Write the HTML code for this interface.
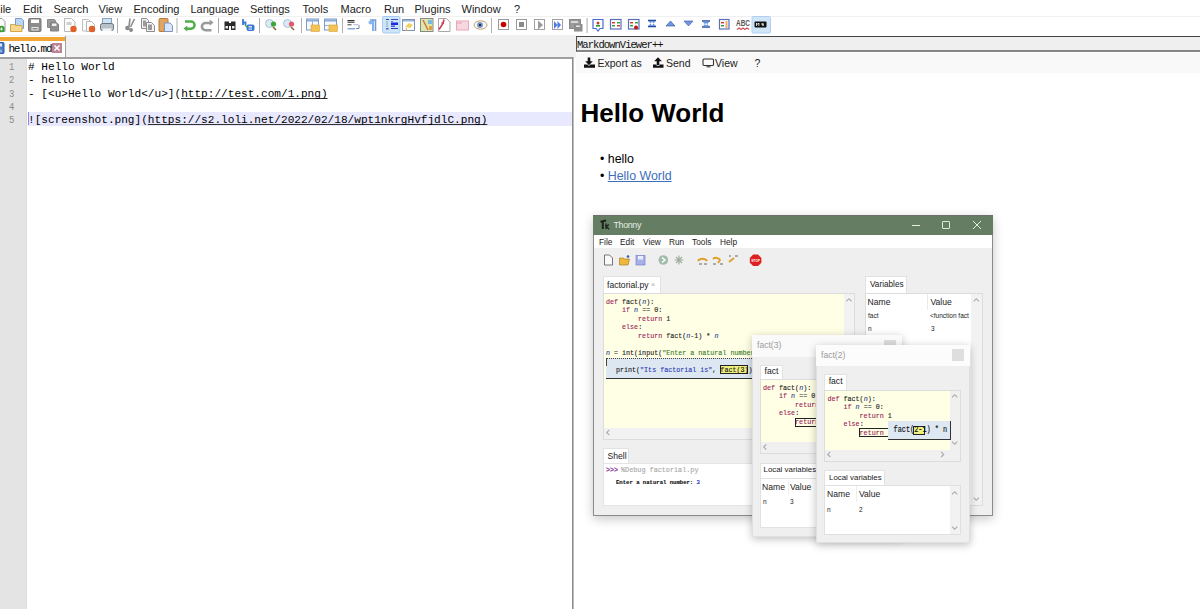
<!DOCTYPE html>
<html><head><meta charset="utf-8">
<style>
*{box-sizing:border-box}
html,body{margin:0;padding:0}
body{width:1200px;height:609px;overflow:hidden;position:relative;background:#fff;font-family:"Liberation Sans",sans-serif;color:#000}
.a{position:absolute}
.m{position:absolute;top:3px;font-size:11px;color:#222;white-space:nowrap;line-height:13px}
.mono{font-family:"Liberation Mono",monospace}
.ed{position:absolute;left:28px;font-family:"Liberation Mono",monospace;font-size:11.1px;white-space:pre;line-height:13px;color:#000}
.ln{position:absolute;left:8.5px;font-family:"Liberation Mono",monospace;font-size:11.1px;line-height:13px;color:#8c8c8c;transform:scaleX(.8);transform-origin:0 0}
.u{text-decoration:underline;text-underline-offset:1px;text-decoration-skip-ink:none;text-decoration-color:#333}
.ic{position:absolute;top:18px;width:14px;height:14px}
.sep{position:absolute;top:18px;width:1px;height:15px;background:#c8c8c8}
</style></head><body>
<!-- menubar -->
<div class="a" style="left:0;top:0;width:1200px;height:16px;background:#fff"></div>
<div class="m" style="left:-6.5px">File</div>
<div class="m" style="left:23px">Edit</div>
<div class="m" style="left:53.5px">Search</div>
<div class="m" style="left:98.5px">View</div>
<div class="m" style="left:133.5px">Encoding</div>
<div class="m" style="left:190.5px">Language</div>
<div class="m" style="left:250px">Settings</div>
<div class="m" style="left:302.5px">Tools</div>
<div class="m" style="left:340.5px">Macro</div>
<div class="m" style="left:384px">Run</div>
<div class="m" style="left:414.5px">Plugins</div>
<div class="m" style="left:461.5px">Window</div>
<div class="m" style="left:514px">?</div>
<!-- toolbar -->
<div class="a" style="left:0;top:16px;width:1200px;height:19px;background:#fff;border-top:1px solid #f0f0f0"></div>
<svg class="a" style="left:0;top:15px" width="800" height="20" viewBox="0 15 800 20">
<!-- new -->
<path d="M-6 18.5h8l3 3v10h-11z" fill="#fbfbfb" stroke="#9a9a9a" stroke-width="1"/>
<circle cx="1.5" cy="29" r="3.2" fill="#3f9a3a"/><path d="M0 29h3M1.5 27.5v3" stroke="#d8f0d0" stroke-width="1"/>
<!-- open -->
<path d="M15.5 18.5h6l2 2v8h-8z" fill="#b9d5f3" stroke="#7a9ccc"/>
<path d="M10.5 24.5h4l1 1h6.5v6h-11.5z" fill="#f6d98c" stroke="#d4a84a"/>
<!-- save -->
<rect x="28.5" y="18.5" width="12.5" height="13" rx="1" fill="#8c8c8c" stroke="#7a7a7a"/>
<rect x="31" y="19.5" width="8" height="3.5" fill="#fff"/>
<rect x="31.5" y="27" width="7" height="3.5" fill="#e6e6e6"/><rect x="32.5" y="28" width="5" height="1.5" fill="#8c8c8c"/>
<!-- save all -->
<path d="M47.5 19.5h7l1 1v7h-8z" fill="#9a9a9a" stroke="#888"/>
<path d="M50.5 22.5h6l2 2v6.5h-8z" fill="#8e8e8e" stroke="#808080"/><rect x="52" y="23.5" width="4.5" height="2.5" fill="#f0f0f0"/>
<!-- close -->
<path d="M64.5 18.5h7l3.5 3.5v9.5h-10.5z" fill="#fcfcfc" stroke="#b8b8b8"/><rect x="66.5" y="22" width="5" height="3" fill="#cfcfcf"/>
<circle cx="73.5" cy="29" r="3.2" fill="#e0622a"/>
<!-- close all -->
<path d="M82.5 19.5h6l2 2v9.5h-8z" fill="#fcfcfc" stroke="#c0c0c0"/>
<path d="M86.5 21.5h5l3 3v7h-8z" fill="#fcfcfc" stroke="#b8b8b8"/>
<circle cx="92" cy="29" r="3.2" fill="#e0622a"/>
<!-- print -->
<rect x="102.5" y="18.5" width="9" height="6" fill="#cfe3f5" stroke="#8aa3bd"/>
<rect x="100.5" y="23.5" width="13" height="7" rx="2" fill="#b8c0c8" stroke="#6a7580"/>
<rect x="102.5" y="28.5" width="9" height="2.5" fill="#f4f4f4"/>
<rect x="117" y="18" width="1" height="15" fill="#b0b0b0"/>
<!-- cut -->
<path d="M130 18.5l-1 8M134.5 19l-4 8" stroke="#8a8a8a" stroke-width="1.6"/>
<circle cx="127.5" cy="28" r="2.3" fill="#8a8a8a"/><circle cx="131" cy="30" r="2" fill="#8a8a8a"/>
<!-- copy -->
<path d="M141.5 18.5h5l2 2v8h-7z" fill="#f4f4f4" stroke="#8c8c8c"/><rect x="143" y="20.5" width="3" height="6" fill="#9a9a9a"/>
<path d="M146.5 22.5h5l3 3v6h-8z" fill="#f4f4f4" stroke="#8c8c8c"/><rect x="148" y="24.5" width="4" height="5.5" fill="#9a9a9a"/>
<!-- paste -->
<rect x="159" y="18.5" width="9" height="13" rx="1" fill="#e0a560" stroke="#b87a3a"/>
<path d="M164.5 23h5.5l2.5 2.5v6h-8z" fill="#d8e8fa" stroke="#7c95c0"/>
<rect x="176.5" y="18" width="1" height="15" fill="#b0b0b0"/>
<!-- undo -->
<path d="M185 21.5h6a3.6 3.6 0 0 1 0 7.2h-4.5" fill="none" stroke="#4fae4a" stroke-width="2.4"/>
<path d="M183.5 28.6l3.8-3v6z" fill="#4fae4a"/>
<!-- redo -->
<path d="M211 23h-5.5a3.6 3.6 0 0 0 0 7.2h6" fill="none" stroke="#9a9a9a" stroke-width="2.6"/>
<path d="M213.5 22.6l-3.8-3.2v6.4z" fill="#9a9a9a"/>
<rect x="218" y="18" width="1" height="15" fill="#a8a8a8"/>
<!-- find -->
<rect x="224.5" y="21.5" width="4.5" height="8.5" fill="#2a2a2a"/><rect x="231" y="21.5" width="4.5" height="8.5" fill="#2a2a2a"/>
<rect x="229" y="23" width="2" height="3" fill="#2a2a2a"/><rect x="225.5" y="26" width="2.5" height="2.5" fill="#e8e8e8"/><rect x="232" y="26" width="2.5" height="2.5" fill="#e8e8e8"/>
<!-- replace -->
<path d="M243 19v6M243 22.5h2.5v2.5" stroke="#3a78d0" stroke-width="1.8" fill="none"/>
<rect x="246.5" y="24.5" width="8" height="6.5" rx="2" fill="#3a78d0"/><rect x="248.5" y="26" width="3.5" height="1.5" fill="#cfe0f8"/><rect x="248.5" y="28.5" width="3.5" height="1.2" fill="#cfe0f8"/>
<path d="M245 25l2 2" stroke="#3aa83a" stroke-width="1.2"/>
<rect x="259" y="18" width="1" height="15" fill="#a8a8a8"/>
<!-- zoom in -->
<circle cx="269.5" cy="23.5" r="4" fill="#dbe9f6" stroke="#a9c2dc"/>
<circle cx="273.5" cy="24" r="2.6" fill="#3aa83a"/><path d="M273 27l3 3" stroke="#8a6a3a" stroke-width="1.6"/>
<!-- zoom out -->
<circle cx="287.5" cy="23.5" r="4" fill="#dbe9f6" stroke="#a9c2dc"/>
<circle cx="291.5" cy="24" r="2.6" fill="#e05a6a"/><path d="M291 27l3 3" stroke="#8a6a3a" stroke-width="1.6"/>
<rect x="301" y="18" width="1" height="15" fill="#b0b0b0"/>
<!-- sync v -->
<rect x="306.5" y="19" width="12" height="11" fill="#f4f8fc" stroke="#7a9cc8"/><rect x="307" y="19.5" width="11" height="2" fill="#8aaad8"/><path d="M312.5 21v9" stroke="#9ab0d0"/>
<rect x="311" y="25" width="8.5" height="6.5" fill="#f3c451" stroke="#d6a43a" stroke-width=".6"/>
<!-- sync h -->
<rect x="324.5" y="19" width="12" height="11" fill="#f4f8fc" stroke="#7a9cc8"/><rect x="325" y="19.5" width="11" height="2" fill="#8aaad8"/><path d="M325 25.5h11" stroke="#9ab0d0"/>
<rect x="329" y="25" width="8.5" height="6.5" fill="#f3c451" stroke="#d6a43a" stroke-width=".6"/>
<rect x="342" y="18" width="1" height="15" fill="#b0b0b0"/>
<!-- word wrap -->
<rect x="347.5" y="20" width="7" height="1.4" fill="#333"/><rect x="347.5" y="22" width="7" height="1" fill="#666"/>
<rect x="347.5" y="24" width="4" height="1.4" fill="#777"/><rect x="353.5" y="24.2" width="5" height="1" fill="#a8b8d8"/>
<rect x="347.5" y="28" width="7.5" height="1.5" fill="#8aa8d8"/><path d="M359 25v3.5h-3" fill="none" stroke="#7088b0" stroke-width="1"/>
<!-- pilcrow -->
<path d="M370 20h5.5v11M373 20v11" stroke="#6d9ddb" stroke-width="1.6" fill="none"/><circle cx="370.5" cy="22.5" r="2" fill="#8ab6ee"/>
<!-- indent guide highlighted -->
<rect x="382.5" y="16.5" width="17.5" height="16.5" rx="1.5" fill="#cde4f9" stroke="#a6cbf0"/>
<rect x="386" y="19" width="3" height="1" fill="#2a3fa8"/><rect x="386.5" y="21" width="1" height="6" fill="#8ab"/>
<rect x="386" y="28" width="2.5" height="1.5" fill="#4a5fd8"/>
<rect x="391" y="19" width="7" height="1" fill="#3a4ab8"/><rect x="391" y="21" width="2" height="1" fill="#6a7ad8"/>
<rect x="391" y="22.5" width="7" height="2.5" fill="#1a2ae0"/><rect x="391" y="25.5" width="4" height="1.5" fill="#4a5ae0"/><rect x="391" y="28" width="7" height="1" fill="#2a3ab8"/>
<!-- udl -->
<rect x="402.5" y="19.5" width="12" height="11" fill="#fdfdfd" stroke="#7c94b8"/><rect x="403" y="20" width="11" height="1.5" fill="#9ab4d8"/>
<path d="M405 27l4-4 4 2-3 3z" fill="#f0d060"/><path d="M406 28l1 3" stroke="#f0a040" stroke-width="1"/>
<!-- doc map -->
<rect x="420.5" y="18.5" width="12.5" height="13" fill="#d8e8a8" stroke="#888"/><path d="M423 20l5 10" stroke="#e06040" stroke-width="1.2"/><rect x="428" y="20" width="4" height="4" fill="#7ab8e0"/><rect x="429" y="26" width="3" height="4" fill="#e0a040"/>
<!-- function list -->
<path d="M438.5 18.5h8l3.5 3.5v9.5h-11.5z" fill="#fff" stroke="#a8a8a8"/><path d="M439 29.5l4-6l1-4" stroke="#d03a5a" stroke-width="1.6" fill="none"/><path d="M441 23h3" stroke="#d03a5a"/>
<!-- folder pink -->
<rect x="456.5" y="21" width="12" height="9" fill="#f8d8e0" stroke="#e8a8b8"/><path d="M457 23h5" stroke="#e0a0b0"/>
<!-- eye -->
<ellipse cx="480.5" cy="25" rx="6.5" ry="4.2" fill="#f8f8f8" stroke="#c8a070" stroke-width="1"/><circle cx="480" cy="25" r="3" fill="#7a9cc8"/><circle cx="480" cy="25" r="1.2" fill="#1a2a4a"/>
<rect x="491" y="18" width="1" height="15" fill="#b0b0b0"/>
<!-- record -->
<rect x="498.5" y="19.5" width="10" height="10" fill="#fff" stroke="#9a9a9a"/><circle cx="503.5" cy="24.5" r="2.8" fill="#cc0000"/>
<!-- stop -->
<rect x="516.5" y="19.5" width="10" height="10" fill="#fff" stroke="#9a9a9a"/><rect x="519" y="22" width="5" height="5" fill="#8a8a8a"/>
<!-- play -->
<rect x="534.5" y="19.5" width="10" height="10" fill="#fff" stroke="#a0a0a0"/><path d="M538 20.5l5 4.5-5 4.5z" fill="#9a9a9a"/>
<!-- run multiple -->
<rect x="552.5" y="19.5" width="10" height="10" fill="#fff" stroke="#a0a0a0"/><path d="M554 21l3.5 4-3.5 4zM557.5 21l3.5 4-3.5 4z" fill="#4a7ae0"/>
<!-- save macro -->
<rect x="569.5" y="19.5" width="11" height="9" fill="#9a9a9a" stroke="#888"/><rect x="571" y="21" width="7" height="2" fill="#d8d8d8"/>
<rect x="574" y="24" width="8.5" height="7.5" fill="#8e8e8e"/><rect x="576" y="25.5" width="4" height="1.5" fill="#e8e8e8"/>
<rect x="586.5" y="18" width="1.2" height="15" fill="#b8b8b8"/>
<!-- compare -->
<path d="M593 19.5h10v9h-3l-2 2.5-2-2.5h-3z" fill="#fff" stroke="#4a6ad0" stroke-width="1.2"/><circle cx="598" cy="23" r="1.5" fill="#c04030"/><rect x="596" y="25" width="4" height="1.6" fill="#2a9a3a"/>
<!-- compare2 -->
<rect x="610.5" y="19.5" width="10.5" height="9.5" fill="#fff" stroke="#5a70b8" stroke-width="1.2"/><rect x="612" y="22" width="3" height="1.4" fill="#d03030"/><rect x="617" y="22" width="3" height="1.4" fill="#2a9a3a"/><rect x="612" y="25" width="3" height="1.4" fill="#2a9a3a"/><rect x="617" y="25" width="3" height="1.4" fill="#d03030"/>
<!-- clear -->
<rect x="628.5" y="19.5" width="10.5" height="9.5" fill="#fff" stroke="#5a70b8" stroke-width="1.2"/><rect x="630" y="22" width="3" height="1.4" fill="#d03030"/><rect x="635" y="22" width="3" height="1.4" fill="#2a9a3a"/><rect x="630" y="25" width="3" height="1.4" fill="#2a9a3a"/><circle cx="636" cy="27.5" r="2" fill="#c01818"/>
<!-- first -->
<path d="M648 20.5h8M648 26.5h8" stroke="#2a4aa0" stroke-width="1.6"/><path d="M648.5 21l3.5 4.5 3.5-4.5z M648.5 26l3.5-4.5 3.5 4.5z" fill="#6a98e0"/>
<!-- prev -->
<path d="M666 26l4.5-5 4.5 5z" fill="#6a98e0" stroke="#2a4aa0" stroke-width=".6"/>
<!-- next -->
<path d="M684 21l4.5 5 4.5-5z" fill="#6a98e0" stroke="#4a4ab0" stroke-width=".6"/>
<!-- last -->
<path d="M702 21h8M702 27h8" stroke="#2a4aa0" stroke-width="1.6"/><path d="M702.5 21.5l3.5 4 3.5-4z M702.5 26.5l3.5-3.5 3.5 3.5z" fill="#6a98e0"/>
<!-- navbar -->
<rect x="719.5" y="19.5" width="9.5" height="9.5" fill="#fff" stroke="#5a70b8" stroke-width="1.2"/><rect x="721" y="22" width="3" height="1.4" fill="#d03030"/><rect x="721" y="25" width="3" height="1.4" fill="#2a9a3a"/><rect x="725.5" y="21" width="2" height="7" fill="#f0a870"/>
<!-- ABC -->
<text x="736" y="26" font-family="Liberation Sans" font-size="8.5" font-weight="bold" fill="#555" textLength="14" lengthAdjust="spacingAndGlyphs">ABC</text>
<path d="M737 29.5l2-1.5 2 1.5 2-1.5 2 1.5 2-1.5 2 1.5" fill="none" stroke="#d0505a" stroke-width="1.2"/>
<!-- MD highlighted -->
<rect x="752" y="16.5" width="18.5" height="16.5" rx="1" fill="#d0e5f8" stroke="#b0d0f0"/>
<rect x="754.5" y="21.5" width="12" height="6" rx="1" fill="#111"/><path d="M756.5 23v3M756.5 23l1.2 1.4 1.2-1.4v3M762 23v2h2M763 23v3" stroke="#fff" stroke-width=".8" fill="none"/>
</svg>

<!-- left tab area -->
<div class="a" style="left:0;top:35px;width:576px;height:23px;background:#f0f0f0"></div>
<div class="a" style="left:0;top:36px;width:66px;height:22px;background:#fff;border-right:1px solid #a0a0a0"></div>
<div class="a" style="left:0;top:37px;width:65px;height:3.5px;background:#f0a535"></div>
<svg class="a" style="left:0;top:42px" width="6" height="12" viewBox="0 0 6 12"><rect x="-6" y="0.5" width="10" height="11" rx="1" fill="#4a7ac8" stroke="#2a5aa8"/><rect x="-4" y="1.5" width="6" height="3" fill="#dfe8f8"/><rect x="-4" y="7.5" width="6" height="3" fill="#8ab0e0"/></svg>
<div class="a mono" style="left:8.5px;top:43.2px;font-size:11px;line-height:12px;color:#000;letter-spacing:-1.25px">hello.md</div>
<svg class="a" style="left:52px;top:43px" width="10" height="10" viewBox="0 0 10 10"><rect width="10" height="10" fill="#bb8596"/><path d="M2.5 2.5l5 5M7.5 2.5l-5 5" stroke="#fff" stroke-width="1.6"/></svg>
<!-- editor -->
<div class="a" style="left:0;top:57px;width:572px;height:2px;background:#a0a0a0"></div>
<div class="a" style="left:0;top:59px;width:572px;height:550px;background:#fff"></div>
<div class="a" style="left:0;top:59px;width:27px;height:550px;background:#e4e4e4"></div>
<div class="a" style="left:574px;top:35px;width:2px;height:23px;background:#f0f0f0"></div>
<div class="a" style="left:572px;top:57px;width:1px;height:552px;background:#8c8c8c"></div>
<div class="a" style="left:573px;top:57px;width:1px;height:552px;background:#bdbdbd"></div>
<div class="a" style="left:26px;top:59px;width:1px;height:550px;background:#dcdcdc"></div>
<div class="a" style="left:28px;top:112px;width:544px;height:14px;background:#e8e8ff"></div>
<div class="a" style="left:28px;top:112px;width:1px;height:13px;background:#8a8ae8"></div>
<div class="ln" style="top:61px">1</div>
<div class="ln" style="top:74.25px">2</div>
<div class="ln" style="top:87.5px">3</div>
<div class="ln" style="top:100.75px">4</div>
<div class="ln" style="top:114px">5</div>
<div class="ed" style="top:61px"># Hello World</div>
<div class="ed" style="top:74.25px">- hello</div>
<div class="ed" style="top:87.5px">- [&lt;u&gt;Hello World&lt;/u&gt;](<span class="u">http://test.com/1.png)</span></div>
<div class="ed" style="top:114px">![screenshot.png](<span class="u">https://s2.loli.net/2022/02/18/wpt1nkrgHvfjdlC.png)</span></div>
<!-- right panel -->
<div class="a" style="left:576px;top:35px;width:624px;height:574px;background:#fff"></div>
<div class="a" style="left:576px;top:36px;width:624px;height:16px;background:#efefef;border-top:1px solid #444;border-left:1px solid #555;border-bottom:2px solid #858585"></div>
<div class="a" style="left:577px;top:38.5px;font-family:'Liberation Mono',monospace;font-size:10.5px;line-height:12px;color:#111;letter-spacing:-0.95px">MarkdownViewer++</div>
<div class="a" style="left:576px;top:52px;width:624px;height:21px;background:#f9f9f9;border-top:1px solid #fff"></div>
<svg class="a" style="left:583px;top:56px" width="14" height="13" viewBox="0 0 14 13"><path d="M6 1.5v5" stroke="#111" stroke-width="2.6"/><path d="M2.2 5.2l3.8 4 3.8-4z" fill="#111"/><path d="M1 8.5h3.5l1.5 1.5 1.5-1.5h4.5v3.2h-11z" fill="#111"/></svg>
<div class="a" style="left:597.5px;top:57.3px;font-size:10.5px;line-height:12px;color:#222">Export as</div>
<svg class="a" style="left:652px;top:56px" width="14" height="13" viewBox="0 0 14 13"><path d="M6 9v-5" stroke="#111" stroke-width="2.6"/><path d="M2.2 5.2l3.8-4 3.8 4z" fill="#111"/><path d="M1 8.5h3.5v1.2h3v-1.2h4v3.2h-10.5z" fill="#111"/></svg>
<div class="a" style="left:666px;top:57.3px;font-size:10.5px;line-height:12px;color:#222">Send</div>
<svg class="a" style="left:702px;top:57.5px" width="13" height="10" viewBox="0 0 13 10"><rect x="1" y="1" width="10.5" height="6.5" rx="1" fill="none" stroke="#333" stroke-width="1.1"/><path d="M4.5 8.8h4" stroke="#333" stroke-width="1.1"/></svg>
<div class="a" style="left:715px;top:57.3px;font-size:10.5px;line-height:12px;color:#222">View</div>
<div class="a" style="left:754.5px;top:57.3px;font-size:10.5px;line-height:12px;color:#222">?</div>

<div class="a" style="left:580.5px;top:98px;font-size:26px;font-weight:bold;line-height:30px">Hello World</div>
<div class="a" style="left:600px;top:151.2px;font-size:12.4px;line-height:16px">• hello</div>
<div class="a" style="left:600px;top:167.7px;font-size:12.4px;line-height:16px">• <span style="color:#3b70b8;text-decoration:underline;text-underline-offset:1px">Hello World</span></div>
<!-- THONNY -->
<style>
.t{position:absolute;font-family:"Liberation Sans",sans-serif;white-space:nowrap;line-height:1}
.c{position:absolute;font-family:"Liberation Mono",monospace;font-size:6.7px;white-space:pre;line-height:1;color:#1a1a1a;font-weight:normal;-webkit-text-stroke:.12px;margin-top:.7px}
.kw{color:#9a2257}
.it{font-style:italic;color:#2f3f8f}
.st{color:#3a7d2a}
.tab{position:absolute;background:#fff;border:1px solid #e2e2e2;border-bottom:none}
.sa{position:absolute;font-family:"Liberation Sans",sans-serif;font-size:7px;color:#a8a8a8;line-height:1}
</style>
<!-- main window shadow -->
<div class="a" style="left:593px;top:215px;width:400px;height:301px;box-shadow:0 3px 10px rgba(0,0,0,.22)"></div>
<div class="a" style="left:593px;top:215px;width:400px;height:301px;background:#efefef;border:1px solid #8a8a8a;border-top:none"></div>
<div class="a" style="left:593px;top:215px;width:400px;height:20px;background:#657d62;border-top:1px solid #6b706b"></div>
<svg class="a" style="left:599px;top:219px" width="12" height="13" viewBox="0 0 12 13"><path d="M1.5 2.8l5.5-1.2M3.8 2.3v7.8" stroke="#1a241a" stroke-width="2" fill="none"/><path d="M7 4.5v5.5M7 8l2.8-2.5M7.6 7.6l2.4 2.6" stroke="#1a241a" stroke-width="1.4" fill="none"/></svg>
<div class="t" style="left:613.5px;top:220.5px;font-size:8.9px;color:#e6eee4;letter-spacing:-.35px">Thonny</div>
<div class="a" style="left:912px;top:224.5px;width:8px;height:1.5px;background:#e4ece2"></div>
<div class="a" style="left:942px;top:221px;width:8px;height:8px;border:1px solid #dfe8dc;border-radius:1px"></div>
<svg class="a" style="left:972px;top:220px" width="10" height="10" viewBox="0 0 10 10"><path d="M1 1l8 8M9 1l-8 8" stroke="#e4ece2" stroke-width="1"/></svg>
<div class="a" style="left:594px;top:235px;width:398px;height:13px;background:#fff"></div>
<div class="t" style="left:599px;top:238px;font-size:8.3px;color:#222">File</div>
<div class="t" style="left:620px;top:238px;font-size:8.3px;color:#222">Edit</div>
<div class="t" style="left:643px;top:238px;font-size:8.3px;color:#222">View</div>
<div class="t" style="left:669px;top:238px;font-size:8.3px;color:#222">Run</div>
<div class="t" style="left:692px;top:238px;font-size:8.3px;color:#222">Tools</div>
<div class="t" style="left:720px;top:238px;font-size:8.3px;color:#222">Help</div>
<!-- thonny toolbar icons -->
<svg class="a" style="left:600px;top:252px" width="170" height="16" viewBox="600 252 170 16">
<path d="M604.5 255h5l3 3v7h-8z" fill="#fafafa" stroke="#555" stroke-width=".8"/>
<path d="M619.5 258h4l1 1h5l-1.5 6h-8.5z" fill="#f0b838" stroke="#9a7020" stroke-width=".6"/><circle cx="628" cy="256.5" r="1.3" fill="#3a5ab0"/>
<rect x="636" y="255.5" width="9" height="9.5" fill="#a8b0e8" stroke="#6a74c0" stroke-width=".6"/><rect x="638" y="256" width="5" height="3.5" fill="#e8ecff"/>
<circle cx="663.3" cy="260" r="4.8" fill="#a2bcaa"/><path d="M662 257.5l3 2.5-3 2.5" stroke="#fff" stroke-width="1.4" fill="none"/>
<path d="M676 257l6 6M682 257l-6 6M679 255.5v9M674.5 260h9" stroke="#a0b0a0" stroke-width="1.2"/>
<path d="M698 261a5 4 0 0 1 9 0" fill="none" stroke="#e0a030" stroke-width="2"/><path d="M699 264h3M704 264h3" stroke="#444" stroke-width=".8"/>
<path d="M713 259a4 3 0 0 1 7 1l-2 3" fill="none" stroke="#e0a030" stroke-width="2"/><path d="M713 264h3M720 264h3" stroke="#444" stroke-width=".8"/>
<path d="M729 262l5-4" fill="none" stroke="#e0a030" stroke-width="2"/><path d="M735 256h3M729 256h2" stroke="#444" stroke-width=".8"/>
<path d="M753.2 254.5h4.8l3.4 3.4v4.8l-3.4 3.4h-4.8l-3.4-3.4v-4.8z" fill="#dd2020"/><text x="751.2" y="261.8" font-family="Liberation Sans" font-size="3.2" font-weight="bold" fill="#fff">STOP</text>
</svg>
<!-- editor tab -->
<div class="tab" style="left:603px;top:276px;width:58px;height:18px"></div>
<div class="t" style="left:607px;top:280.8px;font-size:8.6px;color:#222">factorial.py</div>
<div class="t" style="left:651px;top:281px;font-size:7px;color:#aaa">×</div>
<!-- editor panel -->
<div class="a" style="left:603px;top:293px;width:252px;height:147px;background:#f2f2f2;border:1px solid #dcdcdc"></div>
<div class="a" style="left:604px;top:294px;width:240px;height:134px;background:#ffffe6"></div>
<div class="c" style="left:606px;top:298px"><span class="kw">def</span> fact(<span class="it">n</span>):</div>
<div class="c" style="left:606px;top:306.6px">    <span class="kw">if</span> <span class="it">n</span> == 0:</div>
<div class="c" style="left:606px;top:315.2px">        <span class="kw">return</span> 1</div>
<div class="c" style="left:606px;top:323.8px">    <span class="kw">else</span>:</div>
<div class="c" style="left:606px;top:332.4px">        <span class="kw">return</span> fact(<span class="it">n</span>-1) * <span class="it">n</span></div>
<div class="c" style="left:606px;top:349.6px"><span class="it">n</span> = int(input(<span class="st">"Enter a natural number: "</span>))</div>
<div class="a" style="left:606px;top:357.5px;width:150px;height:21.5px;background:#dde7f1;border-top:1px dotted #444;border-bottom:1.5px solid #333"></div>
<div class="a" style="left:606px;top:358px;width:1px;height:8px;background:#444"></div>
<div class="a" style="left:720px;top:365px;width:28px;height:9px;background:#f0f080;border:1px solid #222"></div>
<div class="c" style="left:616px;top:366px">print(<span style="color:#2a3ab8">"Its factorial is"</span>, fact(3))</div>
<!-- variables tab/panel -->
<div class="tab" style="left:865px;top:276px;width:42px;height:18px"></div>
<div class="t" style="left:870px;top:281px;font-size:8.2px;color:#222">Variables</div>
<div class="a" style="left:865px;top:293px;width:118px;height:213px;background:#f2f2f2;border:1px solid #dcdcdc"></div>
<div class="a" style="left:866px;top:294px;width:105px;height:211px;background:#fff"></div>
<div class="a" style="left:927px;top:294px;width:1px;height:16px;background:#eaeaea"></div>
<div class="t" style="left:867.5px;top:298px;font-size:8.6px;color:#222">Name</div>
<div class="t" style="left:930.5px;top:298px;font-size:8.6px;color:#222">Value</div>
<div class="t" style="left:868px;top:313px;font-size:6.5px;color:#222">fact</div>
<div class="t" style="left:930px;top:313px;width:40px;overflow:hidden;font-size:6.5px;color:#222">&lt;function fact a</div>
<div class="t" style="left:868px;top:326px;font-size:6.5px;color:#222">n</div>
<div class="t" style="left:931px;top:326px;font-size:6.5px;color:#222">3</div>
<!-- shell -->
<div class="tab" style="left:603px;top:448px;width:26px;height:16px"></div>
<div class="t" style="left:607.5px;top:451.5px;font-size:8.6px;color:#222">Shell</div>
<div class="a" style="left:603px;top:463px;width:252px;height:43px;background:#fff;border:1px solid #e4e4e4"></div>
<div class="c" style="left:606px;top:466px;color:#8a3a9a;font-weight:bold">&gt;&gt;&gt;</div>
<div class="c" style="left:621px;top:466px;color:#a8a8a8;font-weight:normal;font-size:6.8px">%Debug factorial.py</div>
<div class="c" style="left:616px;top:479.5px;font-size:5.6px;font-weight:bold;color:#111">Enter a natural number: <span style="color:#3a3ac0">3</span></div>

<svg class="a" style="left:0;top:0" width="1200" height="609"><path d="M846.4 301.3l2.6-2.6 2.6 2.6 M609.3 429.9l-2.6 2.6 2.6 2.6 M973.6999999999999 301.3l2.6-2.6 2.6 2.6 M973.6999999999999 497.7l2.6 2.6 2.6-2.6" fill="none" stroke="#a8a8a8" stroke-width="1.1"/></svg>
<!-- fact(3) window -->
<div class="a" style="left:752px;top:334.5px;width:150px;height:202px;background:#efefef;box-shadow:0 2px 8px rgba(0,0,0,.25);border:1px solid #e0e0e0"></div>
<div class="a" style="left:752px;top:334.5px;width:150px;height:22px;background:#fafafa"></div>
<div class="t" style="left:757px;top:340.5px;font-size:8.6px;color:#9a9a9a">fact(3)</div>
<div class="a" style="left:884px;top:340px;width:12px;height:12px;background:#dcdcdc"></div>
<div class="tab" style="left:760px;top:364.5px;width:23px;height:15px"></div>
<div class="t" style="left:764.5px;top:366.8px;font-size:8.6px;color:#222">fact</div>
<div class="a" style="left:760px;top:379px;width:140px;height:75px;background:#f0f0f0;border:1px solid #dcdcdc"></div>
<div class="a" style="left:761px;top:380px;width:130px;height:62px;background:#ffffe6"></div>
<div class="c" style="left:763px;top:384px"><span class="kw">def</span> fact(<span class="it">n</span>):</div>
<div class="c" style="left:763px;top:392.6px">    <span class="kw">if</span> <span class="it">n</span> == 0:</div>
<div class="c" style="left:763px;top:401.2px">        <span class="kw">return</span> 1</div>
<div class="c" style="left:763px;top:409.8px">    <span class="kw">else</span>:</div>
<div class="a" style="left:795px;top:418.4px;width:30px;height:9px;border:1px solid #222;background:#ffffe6"></div>
<div class="c" style="left:763px;top:418.6px">        <span class="kw">return</span> fact(<span class="it">n</span>-1) * <span class="it">n</span></div>
<div class="tab" style="left:760px;top:462.5px;width:60px;height:15px"></div>
<div class="t" style="left:763.5px;top:466px;font-size:7.9px;color:#222">Local variables</div>
<div class="a" style="left:759.5px;top:477.5px;width:140px;height:50px;background:#fff;border:1px solid #e2e2e2"></div>
<div class="a" style="left:788px;top:478px;width:1px;height:16px;background:#eee"></div>
<div class="t" style="left:762px;top:482.5px;font-size:8.6px;color:#222">Name</div>
<div class="t" style="left:790px;top:482.5px;font-size:8.6px;color:#222">Value</div>
<div class="t" style="left:763px;top:498.5px;font-size:6.5px;color:#222">n</div>
<div class="t" style="left:790px;top:498.5px;font-size:6.5px;color:#222">3</div>

<svg class="a" style="left:0;top:0" width="1200" height="609"><path d="M766.3 444.4l-2.6 2.6 2.6 2.6" fill="none" stroke="#a8a8a8" stroke-width="1.1"/></svg>
<!-- fact(2) window -->
<div class="a" style="left:815.5px;top:345px;width:154px;height:197.5px;background:#efefef;box-shadow:0 2px 8px rgba(0,0,0,.25);border:1px solid #e0e0e0"></div>
<div class="a" style="left:815.5px;top:345px;width:154px;height:21px;background:#fcfcfc"></div>
<div class="t" style="left:821px;top:351px;font-size:8.6px;color:#9a9a9a">fact(2)</div>
<div class="a" style="left:952px;top:349px;width:12px;height:12px;background:#dedede"></div>
<div class="tab" style="left:824px;top:373.5px;width:23px;height:16px"></div>
<div class="t" style="left:828.7px;top:377px;font-size:8.6px;color:#222">fact</div>
<div class="a" style="left:823.5px;top:389.5px;width:137px;height:72px;background:#f0f0f0;border:1px solid #dcdcdc"></div>
<div class="a" style="left:824.5px;top:390.5px;width:125.5px;height:59px;background:#ffffe6"></div>
<div class="c" style="left:827.5px;top:395px"><span class="kw">def</span> fact(<span class="it">n</span>):</div>
<div class="c" style="left:827.5px;top:403.6px">    <span class="kw">if</span> <span class="it">n</span> == 0:</div>
<div class="c" style="left:827.5px;top:412.2px">        <span class="kw">return</span> 1</div>
<div class="c" style="left:827.5px;top:420.8px">    <span class="kw">else</span>:</div>
<div class="a" style="left:859px;top:428px;width:30px;height:9px;border:1px solid #222"></div>
<div class="c" style="left:827.5px;top:429.4px">        <span class="kw">return</span></div>
<div class="a" style="left:888px;top:421px;width:63px;height:19px;background:#dde8f2;border-right:1.5px solid #333;border-bottom:1.5px solid #333"></div>
<div class="a" style="left:913px;top:426px;width:12px;height:9px;background:#f0f080;border:1px solid #222"></div>
<div class="c" style="left:893.5px;top:426px;font-weight:normal;font-size:6.9px;color:#111;transform:scaleY(1.2);transform-origin:0 100%">fact(2-1) * n</div>
<div class="tab" style="left:824px;top:469.5px;width:61px;height:16px"></div>
<div class="t" style="left:829px;top:473.5px;font-size:7.9px;color:#222">Local variables</div>
<div class="a" style="left:823.5px;top:485px;width:137px;height:49.5px;background:#f2f2f2;border:1px solid #e0e0e0"></div>
<div class="a" style="left:824.5px;top:486px;width:125px;height:47.5px;background:#fff"></div>
<div class="a" style="left:855.5px;top:486px;width:1px;height:16px;background:#eee"></div>
<div class="t" style="left:827px;top:490px;font-size:8.6px;color:#222">Name</div>
<div class="t" style="left:859px;top:490px;font-size:8.6px;color:#222">Value</div>
<div class="t" style="left:827px;top:506.5px;font-size:6.5px;color:#222">n</div>
<div class="t" style="left:859px;top:506.5px;font-size:6.5px;color:#222">2</div>

<svg class="a" style="left:0;top:0" width="1200" height="609"><path d="M952.1 397.3l2.6-2.6 2.6 2.6 M952.1 441.7l2.6 2.6 2.6-2.6 M830.3 451.79999999999995l-2.6 2.6 2.6 2.6 M941.1 451.79999999999995l2.6 2.6-2.6 2.6 M952.1 494.3l2.6-2.6 2.6 2.6 M952.1 526.7l2.6 2.6 2.6-2.6" fill="none" stroke="#a8a8a8" stroke-width="1.1"/></svg>
</body></html>
